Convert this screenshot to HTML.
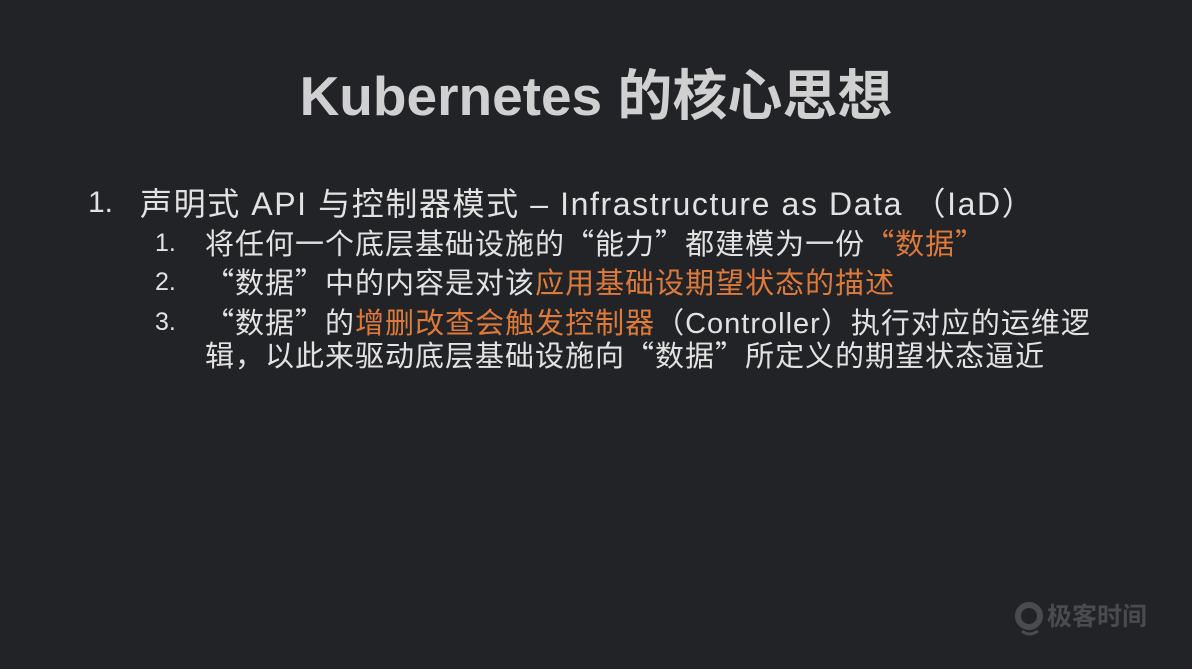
<!DOCTYPE html>
<html><head><meta charset="utf-8"><style>
html,body{margin:0;padding:0}
body{width:1192px;height:669px;background:#222326;position:relative;overflow:hidden;font-family:"Liberation Sans","Noto Sans CJK SC",sans-serif;color:#e2e2e2}
.t{position:absolute;white-space:nowrap}
.o{color:#dc7a3c}
.q{font-family:"Noto Sans CJK SC",sans-serif}
h1{position:absolute;left:0;width:1192px;top:64px;margin:0;text-align:center;font-size:55px;font-weight:bold;color:#d0d0d0;line-height:64px}
.l1{font-size:32px;line-height:38px;letter-spacing:1.6px}
.l2{font-size:29px;line-height:34px;letter-spacing:1px}
.n{font-size:25px;letter-spacing:0}
</style></head><body>
<h1>Kubernetes 的核心思想</h1>
<div class="t l1" style="left:88px;top:184px;font-size:30px;letter-spacing:0">1.</div>
<div class="t l1" style="left:140px;top:183px">声明式 API 与控制器模式 – Infrastructure as Data <span class="q">（</span>IaD<span class="q">）</span></div>
<div class="t l2 n" style="left:155px;top:226px">1.</div>
<div class="t l2" style="left:205px;top:225px">将任何一个底层基础设施的<span class="q">“</span>能力<span class="q">”</span>都建模为一份<span class="o"><span class="q">“</span>数据<span class="q">”</span></span></div>
<div class="t l2 n" style="left:155px;top:265px">2.</div>
<div class="t l2" style="left:205px;top:264px"><span class="q">“</span>数据<span class="q">”</span>中的内容是对该<span class="o">应用基础设期望状态的描述</span></div>
<div class="t l2 n" style="left:155px;top:305px">3.</div>
<div class="t l2" style="left:205px;top:304px"><span class="q">“</span>数据<span class="q">”</span>的<span class="o">增删改查会触发控制器</span><span class="q">（</span>Controller<span class="q">）</span>执行对应的运维逻</div>
<div class="t l2" style="left:205px;top:337px">辑，以此来驱动底层基础设施向<span class="q">“</span>数据<span class="q">”</span>所定义的期望状态逼近</div>
<svg class="t" style="left:1014px;top:601px" width="32" height="36" viewBox="0 0 32 36"><circle cx="15" cy="15" r="11" fill="none" stroke="#4a4b4e" stroke-width="6"/><path d="M8 30 Q15 36 24 30" stroke="#4a4b4e" stroke-width="3" fill="none"/></svg>
<div class="t" style="left:1047px;top:602px;font-size:25px;color:#4a4b4e;font-weight:bold;line-height:30px">极客时间</div>
</body></html>
